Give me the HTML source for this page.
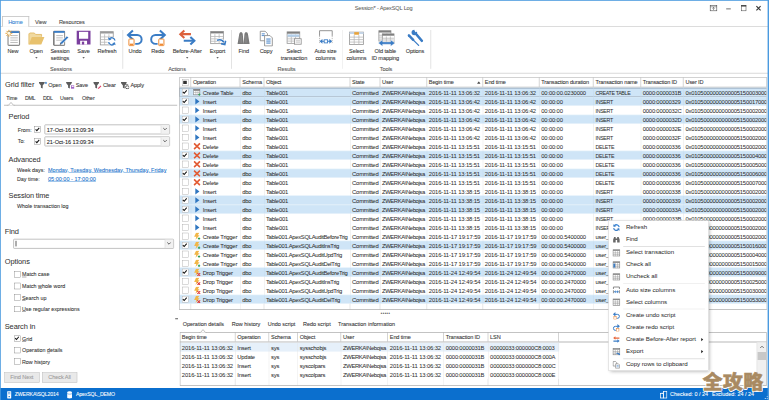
<!DOCTYPE html><html><head><meta charset="utf-8"><title>Session* - ApexSQL Log</title><style>html,body{margin:0;padding:0;background:#fff;overflow:hidden;width:769px;height:400px}
#app{position:absolute;left:0;top:0;width:1922.5px;height:1000px;transform:scale(.4);transform-origin:0 0;background:#fff;font-family:"Liberation Sans","Noto Sans CJK SC",sans-serif;font-size:14px;letter-spacing:-.25px;color:#242424;-webkit-text-stroke:.18px;box-sizing:border-box;overflow:hidden}
#app *{box-sizing:border-box}
#app>div,.grid>div,.gr>div,.gh>div{position:absolute}
#app{margin:0}
.title{left:0;width:1922px;top:11.6px;text-align:center;font-size:14px;letter-spacing:-.42px;color:#555;-webkit-text-stroke:.05px;margin-left:-2px}
.wc{left:1768px;top:6px;width:150px;height:28px}
.tabline{left:0;top:65px;width:1920px;height:2.2px;background:#d4d4d4}
.tab{top:44px;width:56px;height:22px;text-align:center;font-size:14px;line-height:22px;color:#444;left:6px}
.tab.home{left:4.5px;width:68px;top:40px;height:26.6px;line-height:27px;border:2px solid #c2c2c2;border-bottom:none;background:#fff;color:#2a7fd2}
.rb{top:71.2px;width:100px;height:90px;text-align:center}
.ri{height:46px;display:flex;justify-content:center}
.ri svg{width:46px;height:46px;display:block}
.rl{font-size:14px;line-height:16.4px;margin-top:2.5px;color:#333;white-space:nowrap}
.dd{position:absolute;left:47px;top:71.6px;width:0;height:0;border:3px solid transparent;border-top:3.6px solid #333;border-bottom:none}
.rsep{top:75px;width:1.5px;height:97px;background:#dcdcdc}
.rg{top:163.5px;width:150px;text-align:center;font-size:14px;color:#555}
.ribline{left:0;top:181.5px;width:1920px;height:2px;background:#d0d0d0}
.h1{font-size:18.6px;letter-spacing:-.2px;-webkit-text-stroke:.1px;color:#333;white-space:nowrap}
.h2{left:21.5px;font-size:18.4px;letter-spacing:-.3px;-webkit-text-stroke:.1px;color:#333;white-space:nowrap}
.fb{top:200px;height:24px;display:flex;align-items:center;font-size:14px;color:#333;white-space:nowrap}
.fb svg{width:21px;height:21px;margin-right:3px}
.st{top:238.2px;font-size:13.2px;color:#333;white-space:nowrap}
.stline{left:10px;top:252.3px;width:433px;height:12px;border-bottom:2px solid #b0b0b0}
.stline svg,.bnotch svg{position:absolute;left:7px;top:1px;width:21px;height:11px}
.bnotch svg{left:0;top:0}
.lbl{font-size:13.4px;letter-spacing:0;color:#333;white-space:nowrap}
.lbl u{text-decoration:underline}
.lnk{font-size:13.8px;letter-spacing:0;color:#1a73cc;text-decoration:underline;white-space:nowrap}
.cb{width:15.5px;height:15.5px;border:1.8px solid #7a7a7a;background:#fff}
.cb svg{position:absolute;left:-.4px;top:-.4px;width:13.2px;height:13.2px}
.cb.sm{width:16.5px;height:16.5px;position:absolute;left:6.8px;top:3.2px;border:1.6px solid #a2a2a2}
.cb.sm svg{width:14px;height:14px}
.combo{height:25.5px;border:2px solid #b2b2b2;border-radius:2.5px;background:#fff;font-size:14px;letter-spacing:-.2px;line-height:22.6px;padding-left:4.2px;color:#222}
.combo i{position:absolute;right:0;top:0;width:21px;height:21.5px;border-left:1.6px solid #cfcfcf;background:#f1f1f1}
.combo i svg{position:absolute;left:4px;top:5px;width:11px;height:9px}
.caret{position:absolute;left:4px;top:3px;width:1.6px;height:14px;background:#333}
.btn{top:931px;width:88px;height:25.5px;border:1.6px solid #b4b4b4;background:#e9e9e9;color:#9a9a9a;font-size:14px;text-align:center;line-height:23px}
.grid:after{content:"";position:absolute;left:0;top:0;right:0;bottom:0;border:2.2px solid #b4b4b4;pointer-events:none;z-index:3}
.grid{background:#fff;overflow:hidden}
.gh{left:0;top:0;width:100%;height:26px;border-bottom:2.2px solid #a6a6a6;background:#fff}
.gh .c{top:0;height:25px;border-right:2px solid #cacaca;line-height:24.6px;padding-left:4.5px;font-size:14px;color:#333;white-space:nowrap;overflow:hidden}
.gr{left:0;width:100%;height:22.5px}
.gr.on{background:#cfe5f7}
.gr.on:after{content:"";position:absolute;left:0;right:0;top:0;bottom:0;border-top:1.2px solid #e9f3fb;border-bottom:1.2px solid #e9f3fb;pointer-events:none}
.gr.foc{box-shadow:inset 0 2.3px 0 #8da0b3,inset 0 -2.3px 0 #8da0b3,inset 2px 0 0 #8da0b3}
.gr.foc:after{border:none !important}
.gr .c{top:0;height:22.5px;line-height:22px;padding-left:4.5px;font-size:14px;color:#2a2a2a;white-space:nowrap;overflow:hidden;border-right:1.6px solid #dedede}
.gr.on .c{border-right-color:#c0d8ec}
.gr .c svg.oi{position:absolute;left:5.5px;top:2.2px;width:19px;height:19px}
.opt{left:24.8px}
.grid.b .gr.sel{background:#e6f0fa;width:949px}
.grid.b .gr .c{border-right-color:#e2e2e2}
.sorti{position:absolute;right:3.5px;top:10px;width:10px;height:6.5px}
.dots{font-size:16px;font-weight:bold;letter-spacing:.3px;color:#555;line-height:6px}
.pin{width:7px;height:2.6px;background:#333}
.bt{top:801.5px;font-size:13.7px;letter-spacing:0;color:#333;white-space:nowrap}
.bnotch{width:30px;height:12px}
.vsb{position:absolute;right:0;top:26px;width:25px;bottom:0;background:#f0f0f0;border-left:1.4px solid #dcdcdc}
.vsb svg{position:absolute;left:6px;top:7px;width:12px;height:9px}
.vsb .thumb{position:absolute;left:1.5px;top:23.5px;width:21px;height:20px;background:#c8c8c8}
.status{left:0;top:970px;width:1923px;height:31px;background:#0b6fce;color:#fff}
.status div{position:absolute}
.stx{top:9.2px;font-size:13.6px;letter-spacing:0;white-space:nowrap;color:#fff}
.si{top:6px;width:20px;height:22px}
.si svg{width:100%;height:100%}
.grip{right:2px;bottom:2px;width:14px;height:14px}
.grip svg{width:14px;height:14px}
.menu{z-index:40;background:#fff;border:1.4px solid #c6c6c6;box-shadow:3px 3px 9px rgba(0,0,0,.32)}
.menu div{position:absolute}
.mi{left:0;width:100%;height:30px;line-height:30px;font-size:15.5px;letter-spacing:-.15px;color:#303030;-webkit-text-stroke:.05px;white-space:nowrap}
.mi span{position:absolute;left:42.5px;top:-.8px}
.mic{left:9px;top:5px;width:20px;height:20px}
.mic svg{width:20px;height:20px;display:block}
.mi b{position:absolute;right:12.5px;top:10.6px;width:0;height:0;border:4.4px solid transparent;border-left:5.4px solid #222;border-right:none}
.msep{left:36px;right:9px;height:1.5px;background:#dadada}
.wm{left:1756px;top:925.5px;font-family:"Liberation Sans","Noto Sans CJK SC",sans-serif;font-weight:900;font-size:50.4px;line-height:60px;color:#a98a62;letter-spacing:.6px;white-space:nowrap;transform:scaleY(.94);transform-origin:0 85%;-webkit-text-stroke:1.2px #a98a62;text-shadow:-2px 0 0 #fff,2px 0 0 #fff,0 -2px 0 #fff,0 2px 0 #fff,-1.5px -1.5px 0 #fff,1.5px -1.5px 0 #fff,-1.5px 1.5px 0 #fff,1.5px 1.5px 0 #fff;z-index:60}

.bdl{left:0;top:0;width:2.2px;height:1000px;background:#4a9adf;z-index:50}
.bdr{right:0;top:0;width:3.1px;height:1000px;background:#4a9adf;z-index:50}
.bdt{left:0;top:0;width:1922.5px;height:2px;background:#4a9adf;z-index:50}
.grid:not(.b) .gr .c span{position:relative;top:2.1px}
.grid.b .gr .c span{position:relative;top:2.3px}
.gh .c span{position:relative;top:1.2px}
.gh .c{letter-spacing:-.4px}
.gr .k5{letter-spacing:-.66px}
.gr .k6,.gr .k7{letter-spacing:0}
.gr .k8{letter-spacing:-.08px}
.gr .c span.up{font-size:12.6px;letter-spacing:-.5px}
.gr .c span.lg{letter-spacing:-.45px}
.gr .b0,.gr .b5{letter-spacing:0}
.gr .b4{letter-spacing:-.66px}
.stx.cap{font-size:13px;letter-spacing:-.35px}
.vl{width:1.4px;margin-left:-1.4px;background:#e2e2e2}
.gr .c{font-size:14.7px;letter-spacing:-.58px;color:#303030;-webkit-text-stroke:.1px}
.gr .k5,.gr .b4{letter-spacing:-.99px}
.gr .k6,.gr .k7,.gr .b0,.gr .b5{letter-spacing:-.33px}
.gr .k8{letter-spacing:-.41px}
.gr .c span.up{font-size:13.2px;letter-spacing:-.8px}
.gr .c span.lg{letter-spacing:-.78px}
.grid:not(.b):after{border-right-color:#cdd3d8}
</style></head><body>
<div id="app"><div class="bdl"></div><div class="bdr"></div><div class="bdt"></div>
<div class="title">Session* - ApexSQL Log</div>
<div class="wc"><svg viewBox="0 0 150 28" width="150" height="28" fill="none" stroke="#444" stroke-width="1.400"><rect x="7.500" y="7.500" width="16.500" height="13.500"/><path d="M7.500 11h16.500" stroke-width="1.200"/><path d="M15.800 12.500v6.500M13 15.500l2.800-3 2.800 3" stroke-width="1.300"/><path d="M47.500 16.200h11.500" stroke="#6a6a6a" stroke-width="2.400"/><rect x="85.500" y="8" width="11.500" height="13" stroke-width="1.300"/><path d="M85 8.500h12.500" stroke="#333" stroke-width="3"/><path d="M123 9.500l10.500 10.500M133.500 9.500l-10.500 10.500" stroke="#333" stroke-width="2.800"/></svg></div>
<div class="tabline"></div>
<div class="tab home">Home</div><div class="tab" style="left:73.75px">View</div><div class="tab" style="left:147.25px">Resources</div>
<div class="rb" style="left:-17.5px"><div class="ri"><svg viewBox="0 0 32 32"><rect x="7" y="5" width="20" height="24.500" rx="1.500" fill="#fff" stroke="#8c8c8c" stroke-width="2"/><rect x="8" y="5" width="18" height="3" fill="#3a7cc5"/><path d="M11 12.5H24" stroke="#b8b8b8" stroke-width="1.6"/><path d="M11 16.5H24" stroke="#b8b8b8" stroke-width="1.6"/><path d="M11 20.5H24" stroke="#b8b8b8" stroke-width="1.6"/><path d="M11 24.5H24" stroke="#b8b8b8" stroke-width="1.6"/><path d="M8.500 2.500v12M2.500 8.500h12M4.300 4.300l8.400 8.400M12.700 4.300l-8.400 8.400" stroke="#e8a33a" stroke-width="1.700"/><circle cx="8.500" cy="8.500" r="2.600" fill="#fff8e0"/></svg></div><div class="rl">New</div></div>
<div class="rb" style="left:40.5px"><div class="ri"><svg viewBox="0 0 32 32"><path d="M3 28V9.500l1.500-1.500h8l2 2.500h10.500v4" fill="#f0d9a0" stroke="#e3bd6a" stroke-width="1.600"/><path d="M3 28l5-13h22l-5.500 13z" fill="#e8c26e"/></svg></div><div class="rl">Open</div><div class="dd"></div></div>
<div class="rb" style="left:100px"><div class="ri"><svg viewBox="0 0 32 32"><rect x="5" y="5" width="19" height="24.500" rx="1" fill="#fff" stroke="#8c8c8c" stroke-width="1.800"/><path d="M5.300 6v23" stroke="#7a7a7a" stroke-width="2.400"/><rect x="5" y="4.500" width="19" height="3.200" fill="#3a7cc5"/><path d="M9.5 12.5H21" stroke="#b8b8b8" stroke-width="1.6"/><path d="M9.5 16.5H21" stroke="#b8b8b8" stroke-width="1.6"/><path d="M9.5 20.5H21" stroke="#b8b8b8" stroke-width="1.6"/><path d="M15.500 28.500l1.300-4.300L28 13l3 3-11.200 11.200z" fill="#3a7cc5" stroke="#fff" stroke-width="1"/><path d="M15.500 28.500l.9-3 2.100 2.100z" fill="#444"/></svg></div><div class="rl">Session<br>settings</div></div>
<div class="rb" style="left:158.75px"><div class="ri"><svg viewBox="0 0 32 32"><path d="M4 4h24v24H4z" fill="#7b3f9e"/><rect x="8" y="6" width="16" height="12" fill="#fff"/><rect x="10" y="21.5" width="12" height="6.5" fill="#fff"/><rect x="13" y="23" width="4" height="5" fill="#7b3f9e"/></svg></div><div class="rl">Save</div><div class="dd"></div></div>
<div class="rb" style="left:217.5px"><div class="ri"><svg viewBox="0 0 32 32"><rect x="4" y="5.7" width="22.5" height="23" fill="#fff" stroke="#969696" stroke-width="1.4"/><rect x="4" y="5.7" width="22.5" height="3.2" fill="#9a9a9a"/><path d="M4 14.8h22.5" stroke="#b5b5b5" stroke-width="1.3"/><path d="M4 19.4h22.5" stroke="#b5b5b5" stroke-width="1.3"/><path d="M4 24.1h22.5" stroke="#b5b5b5" stroke-width="1.3"/><path d="M11.5 10.2v18.5" stroke="#b5b5b5" stroke-width="1.3"/><path d="M19.0 10.2v18.5" stroke="#b5b5b5" stroke-width="1.3"/><circle cx="24" cy="22.5" r="7.5" fill="#fff"/><path d="M29.5 21a5.6 5.6 0 0 0-10-2.6" fill="none" stroke="#3a7cc5" stroke-width="2.4"/><path d="M17.5 15.5l1 5.4 5-1.8z" fill="#3a7cc5"/><path d="M18.5 24a5.6 5.6 0 0 0 10 2.6" fill="none" stroke="#3a7cc5" stroke-width="2.4"/><path d="M30.5 29.5l-1-5.4-5 1.8z" fill="#3a7cc5"/></svg></div><div class="rl">Refresh</div></div>
<div class="rb" style="left:287.5px"><div class="ri"><svg viewBox="0 0 32 32"><path d="M5 11.500h14.500a7.700 7.700 0 0 1 0 15.400h-3.500" fill="none" stroke="#3a7cc5" stroke-width="3.400"/><path d="M12 3.500l-8.500 8 8.500 8" fill="none" stroke="#3a7cc5" stroke-width="3.600"/><rect x="5" y="18.500" width="9" height="11.500" rx="1" fill="#fff" stroke="#ee8a34" stroke-width="1.700"/><rect x="6.500" y="26.500" width="6" height="2.500" fill="#ee8a34"/></svg></div><div class="rl">Undo</div></div>
<div class="rb" style="left:344.25px"><div class="ri"><svg viewBox="0 0 32 32"><path d="M27 11.500H12.500a7.700 7.700 0 0 0 0 15.400h3.500" fill="none" stroke="#3a7cc5" stroke-width="3.400"/><path d="M20 3.500l8.500 8-8.500 8" fill="none" stroke="#3a7cc5" stroke-width="3.600"/><rect x="18" y="18.500" width="9" height="11.500" rx="1" fill="#fff" stroke="#ee8a34" stroke-width="1.700"/><rect x="19.500" y="26.500" width="6" height="2.500" fill="#ee8a34"/></svg></div><div class="rl">Redo</div></div>
<div class="rb" style="left:418px"><div class="ri"><svg viewBox="0 0 32 32"><path d="M4.500 10h18" stroke="#dc613c" stroke-width="3.600"/><path d="M11 3.500L4 10l7 6.500" fill="none" stroke="#dc613c" stroke-width="3.600"/><path d="M10 21.500h18" stroke="#3a7cc5" stroke-width="3.600"/><path d="M21.500 15l7 6.500-7 6.500" fill="none" stroke="#3a7cc5" stroke-width="3.600"/></svg></div><div class="rl">Before-After</div><div class="dd"></div></div>
<div class="rb" style="left:493.75px"><div class="ri"><svg viewBox="0 0 32 32"><rect x="4" y="5.5" width="22" height="21" fill="#fff" stroke="#969696" stroke-width="1.4"/><rect x="4" y="5.5" width="22" height="3.2" fill="#7f7f7f"/><path d="M4 14.1h22" stroke="#b5b5b5" stroke-width="1.3"/><path d="M4 18.2h22" stroke="#b5b5b5" stroke-width="1.3"/><path d="M4 22.4h22" stroke="#b5b5b5" stroke-width="1.3"/><path d="M11.3 10.0v16.5" stroke="#b5b5b5" stroke-width="1.3"/><path d="M18.7 10.0v16.5" stroke="#b5b5b5" stroke-width="1.3"/><path d="M15 20.500c5.500-1.500 9.500-.5 11.500 3.500" fill="none" stroke="#fff" stroke-width="5"/><path d="M15 20.500c5.500-1.500 9.500-.5 11.500 3.500" fill="none" stroke="#3a7cc5" stroke-width="2.800"/><path d="M22 26.500l6.500 1.500 1.500-6.500" fill="none" stroke="#3a7cc5" stroke-width="2.800"/></svg></div><div class="rl">Export</div><div class="dd"></div></div>
<div class="rb" style="left:559.25px"><div class="ri"><svg viewBox="0 0 32 32"><path d="M5.500 27L8.500 9.500l1.500-3h3l1.500 3L16 27zM16 27L17.500 9.500l1.500-3h3l1.500 3L26.500 27z" fill="#7a7a7a"/><path d="M10 12v13M12.500 12v13M19 12v13M21.500 12v13" stroke="#9a9a9a" stroke-width=".8"/></svg></div><div class="rl">Find</div></div>
<div class="rb" style="left:615px"><div class="ri"><svg viewBox="0 0 32 32"><path d="M6 5h8.500l4 4v12.500H6z" fill="#fff" stroke="#8c8c8c" stroke-width="1.500"/><path d="M8.5 9.5H14" stroke="#3a7cc5" stroke-width="1.5"/><path d="M8.5 12.5H14" stroke="#3a7cc5" stroke-width="1.5"/><path d="M13.500 12.500h9.500l4 4v14H13.500z" fill="#fff" stroke="#8c8c8c" stroke-width="1.500"/><path d="M16.5 18.5H24" stroke="#3a7cc5" stroke-width="1.7"/><path d="M16.5 22H24" stroke="#3a7cc5" stroke-width="1.7"/><path d="M16.5 25.5H24" stroke="#3a7cc5" stroke-width="1.7"/></svg></div><div class="rl">Copy</div></div>
<div class="rb" style="left:685px"><div class="ri"><svg viewBox="0 0 32 32"><rect x="4" y="6" width="22" height="20" fill="#fff" stroke="#969696" stroke-width="1.4"/><rect x="4" y="6" width="22" height="3.2" fill="#7f7f7f"/><path d="M4 14.4h22" stroke="#b5b5b5" stroke-width="1.3"/><path d="M4 18.2h22" stroke="#b5b5b5" stroke-width="1.3"/><path d="M4 22.1h22" stroke="#b5b5b5" stroke-width="1.3"/><path d="M11.3 10.5v15.5" stroke="#b5b5b5" stroke-width="1.3"/><path d="M18.7 10.5v15.5" stroke="#b5b5b5" stroke-width="1.3"/><rect x="4.800" y="10.500" width="20.400" height="4" fill="#b3cfea"/><rect x="17" y="18" width="11.500" height="9.500" fill="#fff" stroke="#8c8c8c" stroke-width="1.400"/><path d="M19 21.500h7.500M19 24h7.500" stroke="#aaa" stroke-width="1.100"/></svg></div><div class="rl">Select<br>transaction</div></div>
<div class="rb" style="left:763.75px"><div class="ri"><svg viewBox="0 0 32 32"><path d="M5.500 13V4h22v9" fill="none" stroke="#8c8c8c" stroke-width="1.600"/><path d="M5.500 13v14M27.500 13v14" stroke="#b0b0b0" stroke-width="1.400" stroke-dasharray="2 1.500"/><path d="M5.500 22.500l5-4v8zM27.500 22.500l-5-4v8z" fill="#3a7cc5"/><path d="M9 22.500h15" stroke="#3a7cc5" stroke-width="1.800"/><rect x="13.500" y="19.800" width="6" height="5.400" fill="#fff" stroke="#3a7cc5" stroke-width="1.500"/></svg></div><div class="rl">Auto size<br>columns</div></div>
<div class="rb" style="left:841.25px"><div class="ri"><svg viewBox="0 0 32 32"><rect x="4" y="6.5" width="24.5" height="21.5" fill="#fff" stroke="#969696" stroke-width="1.4"/><rect x="4" y="6.5" width="24.5" height="3.2" fill="#c3d5e8"/><path d="M4 15.2h24.5" stroke="#b5b5b5" stroke-width="1.3"/><path d="M4 19.5h24.5" stroke="#b5b5b5" stroke-width="1.3"/><path d="M4 23.8h24.5" stroke="#b5b5b5" stroke-width="1.3"/><path d="M12.2 11.0v17.0" stroke="#b5b5b5" stroke-width="1.3"/><path d="M20.3 11.0v17.0" stroke="#b5b5b5" stroke-width="1.3"/><rect x="12.200" y="6.500" width="8.200" height="4.500" fill="#e8a33a"/></svg></div><div class="rl">Select<br>columns</div></div>
<div class="rb" style="left:913.25px"><div class="ri"><svg viewBox="0 0 32 32"><rect x="5" y="4" width="21" height="18" fill="#fff" stroke="#969696" stroke-width="1.4"/><rect x="5" y="4" width="21" height="3.2" fill="#7f7f7f"/><path d="M5 11.9h21" stroke="#b5b5b5" stroke-width="1.3"/><path d="M5 15.2h21" stroke="#b5b5b5" stroke-width="1.3"/><path d="M5 18.6h21" stroke="#b5b5b5" stroke-width="1.3"/><path d="M12.0 8.5v13.5" stroke="#b5b5b5" stroke-width="1.3"/><path d="M19.0 8.5v13.5" stroke="#b5b5b5" stroke-width="1.3"/><rect x="11" y="9.5" width="21" height="17" fill="#fff" stroke="#969696" stroke-width="1.4"/><rect x="11" y="9.5" width="21" height="3.2" fill="#7f7f7f"/><path d="M11 17.1h21" stroke="#b5b5b5" stroke-width="1.3"/><path d="M11 20.2h21" stroke="#b5b5b5" stroke-width="1.3"/><path d="M11 23.4h21" stroke="#b5b5b5" stroke-width="1.3"/><path d="M18.0 14.0v12.5" stroke="#b5b5b5" stroke-width="1.3"/><path d="M25.0 14.0v12.5" stroke="#b5b5b5" stroke-width="1.3"/><path d="M4 25.500l7.500-5.500v3.500h14v-3.500l7.500 5.500-7.500 5.500v-3.500h-14v3.500z" fill="#3a7cc5" stroke="#fff" stroke-width=".6"/></svg></div><div class="rl">Old table<br>ID mapping</div></div>
<div class="rb" style="left:987.5px"><div class="ri"><svg viewBox="0 0 32 32"><path d="M16 8l11.500 13.500" stroke="#3a7cc5" stroke-width="4.600" stroke-linecap="round"/><circle cx="14.500" cy="7" r="4.800" fill="#3a7cc5"/><path d="M13.500 1l3 5.500 5-2z" fill="#fff"/><path d="M5 12l7.500 8" stroke="#3a7cc5" stroke-width="4.200" stroke-linecap="round"/><path d="M12 19.500l10 10" stroke="#3a7cc5" stroke-width="2.200" stroke-linecap="round"/></svg></div><div class="rl">Options</div></div>
<div class="rsep" style="left:306.25px"></div>
<div class="rsep" style="left:578.25px"></div>
<div class="rsep" style="left:855.75px"></div>
<div class="rsep" style="left:1076.25px"></div>
<div class="rg" style="left:77.5px">Sessions</div>
<div class="rg" style="left:367.5px">Actions</div>
<div class="rg" style="left:641.25px">Results</div>
<div class="rg" style="left:890px">Tools</div>
<div class="ribline"></div>
<div class="h1" style="left:12.5px;top:201px">Grid filter</div>
<div class="fb" style="left:96.5px"><svg viewBox="0 0 16 16"><path d="M0.300 2.500h10.800v1.700L7.400 8.800v6l-3.400-1.700V8.800L0.300 4.200z" fill="#5c5c5c"/><path d="M13.500 1.800v4.400M11.300 4h4.400M12 2.500l3 3M15 2.500l-3 3" stroke="#3a7cc5" stroke-width="1"/></svg><span>Open</span></div>
<div class="fb" style="left:165.25px"><svg viewBox="0 0 16 16"><path d="M0.300 2.500h10.800v1.700L7.400 8.800v6l-3.400-1.700V8.800L0.300 4.200z" fill="#5c5c5c"/><rect x="9.500" y="8.500" width="6.500" height="6.500" fill="#a064c4"/><rect x="11" y="9.300" width="3.500" height="2.300" fill="#fff"/></svg><span>Save</span></div>
<div class="fb" style="left:233.25px"><svg viewBox="0 0 16 16"><path d="M0.300 2.500h10.800v1.700L7.400 8.800v6l-3.400-1.700V8.800L0.300 4.200z" fill="#5c5c5c"/><path d="M9.500 15l5.500-5.500" stroke="#e0406a" stroke-width="2.200"/></svg><span>Clear</span></div>
<div class="fb" style="left:302px"><svg viewBox="0 0 16 16"><path d="M0.300 2.500h10.800v1.700L7.400 8.800v6l-3.400-1.700V8.800L0.300 4.200z" fill="#5c5c5c"/><ellipse cx="12.500" cy="12.300" rx="3.600" ry="2.800" fill="#fff" stroke="#444" stroke-width="1.600"/><path d="M5 7.300h9" stroke="#5c5c5c" stroke-width="1.400"/></svg><span>Apply</span></div>
<div class="st" style="left:15.5px">Time</div>
<div class="st" style="left:62.5px"><span style="letter-spacing:-.9px">DML</span></div>
<div class="st" style="left:107.5px"><span style="letter-spacing:-.9px">DDL</span></div>
<div class="st" style="left:150px">Users</div>
<div class="st" style="left:204.75px">Other</div>
<div class="stline"><svg viewBox="0 0 21 11"><path d="M0 10.500h4l6.500-7.500 6.500 7.500h4" fill="#fff" stroke="#b0b0b0" stroke-width="2"/><path d="M4.500 11.500h12" stroke="#fff" stroke-width="2.500"/></svg></div>
<div class="h2" style="top:280.25px">Period</div>
<div class="lbl" style="left:44.25px;top:317px">From:</div>
<div class="lbl" style="left:44.25px;top:345.75px">To:</div>
<div class="cb on" style="left:86.25px;top:316.25px"><svg viewBox="0 0 12 12"><path d="M1.800 5.800l2.900 3 5.400-6.200" fill="none" stroke="#111" stroke-width="2.300"/></svg></div>
<div class="combo" style="left:110.75px;top:310.75px;width:313.75px"><span>17-Oct-16 13:09:34</span><i><svg viewBox="0 0 11 9"><path d="M1.200 2.200l4.300 4.300 4.300-4.300" fill="none" stroke="#505050" stroke-width="2.200"/></svg></i></div>
<div class="cb on" style="left:86.25px;top:346.25px"><svg viewBox="0 0 12 12"><path d="M1.800 5.800l2.900 3 5.400-6.200" fill="none" stroke="#111" stroke-width="2.300"/></svg></div>
<div class="combo" style="left:110.75px;top:340.75px;width:313.75px"><span>21-Oct-16 13:09:34</span><i><svg viewBox="0 0 11 9"><path d="M1.200 2.200l4.300 4.300 4.300-4.300" fill="none" stroke="#505050" stroke-width="2.200"/></svg></i></div>
<div class="h2" style="top:387.75px">Advanced</div>
<div class="lbl" style="left:42.5px;top:418.25px">Week days:</div>
<div class="lnk" style="left:120px;top:418.25px">Monday, Tuesday, Wednesday, Thursday, Friday</div>
<div class="lbl" style="left:42.5px;top:440px">Day time:</div>
<div class="lnk" style="left:120px;top:440px">05:00:00 - 17:00:00</div>
<div class="h2" style="top:477px">Session time</div>
<div class="lbl" style="left:42.5px;top:507.5px">Whole transaction log</div>
<div class="h1" style="left:11.75px;top:567.25px">Find</div>
<div class="combo" style="left:33.25px;top:596.5px;width:401.25px"><span class="caret"></span><i><svg viewBox="0 0 11 9"><path d="M1.200 2.200l4.300 4.300 4.300-4.300" fill="none" stroke="#505050" stroke-width="2.200"/></svg></i></div>
<div class="h1" style="left:11.75px;top:643.5px">Options</div>
<div class="cb" style="left:35.75px;top:678.25px"></div><div class="lbl" style="left:55px;top:679.25px"><u>M</u>atch case</div>
<div class="cb" style="left:35.75px;top:707px"></div><div class="lbl" style="left:55px;top:708px">Match <u>w</u>hole word</div>
<div class="cb" style="left:35.75px;top:735.75px"></div><div class="lbl" style="left:55px;top:736.75px"><u>S</u>earch up</div>
<div class="cb" style="left:35.75px;top:764.5px"></div><div class="lbl" style="left:55px;top:765.5px"><u>U</u>se regular expressions</div>
<div class="h1" style="left:11.75px;top:804.75px">Search in</div>
<div class="cb on" style="left:35.75px;top:838.75px"><svg viewBox="0 0 12 12"><path d="M1.800 5.800l2.900 3 5.400-6.200" fill="none" stroke="#111" stroke-width="2.300"/></svg></div><div class="lbl" style="left:55px;top:839.75px"><u>G</u>rid</div>
<div class="cb" style="left:35.75px;top:867.5px"></div><div class="lbl" style="left:55px;top:868.5px">Operation <u>d</u>etails</div>
<div class="cb" style="left:35.75px;top:896.25px"></div><div class="lbl" style="left:55px;top:897.25px">Row his<u>t</u>ory</div>
<div class="btn" style="left:10.5px">Find Next</div><div class="btn" style="left:104.75px">Check All</div>
<div class="grid" style="left:448px;top:193.25px;width:1470.25px;height:582px">
<div class="gh">
<div class="c" style="left:0px;width:29.75px"><div class="cb sm" style="top:5px"><div style="position:absolute;left:2.600px;top:2.600px;width:8.400px;height:8.400px;background:#333"></div></div></div>
<div class="c" style="left:29.75px;width:123.5px"><span>Operation</span></div>
<div class="c" style="left:153.25px;width:59.25px"><span>Schema</span></div>
<div class="c" style="left:212.5px;width:215.25px"><span>Object</span></div>
<div class="c" style="left:427.75px;width:74.75px"><span>State</span></div>
<div class="c" style="left:502.5px;width:117px"><span>User</span></div>
<div class="c" style="left:619.5px;width:140px"><span>Begin time</span><svg class="sorti" viewBox="0 0 8 6"><path d="M0 5.800l4-5.600 4 5.600z" fill="#4a4a4a"/></svg></div>
<div class="c" style="left:759.5px;width:141px"><span>End time</span></div>
<div class="c" style="left:900.5px;width:135.75px"><span>Transaction duration</span></div>
<div class="c" style="left:1036.25px;width:118.25px"><span>Transaction name</span></div>
<div class="c" style="left:1154.5px;width:106.75px"><span>Transaction ID</span></div>
<div class="c" style="left:1261.25px;width:208.25px"><span>User ID</span></div>
</div>
<div class="gr on foc" style="top:26px">
<div class="c k0" style="left:0px;width:29.75px"><div class="cb sm on"><svg viewBox="0 0 12 12"><path d="M1.800 5.800l2.900 3 5.400-6.200" fill="none" stroke="#111" stroke-width="2.300"/></svg></div></div>
<div class="c k1" style="left:29.75px;width:123.5px"><svg class="oi" viewBox="0 0 16 16"><rect x="1" y="2" width="13" height="11.500" fill="#fff" stroke="#777" stroke-width="1.300"/><rect x="1" y="2" width="13" height="3" fill="#777"/><path d="M1 8.500h13M5.500 5v8.500M10 5v8.500" stroke="#9a9a9a" stroke-width="1"/><path d="M13 10.500v5M10.500 13h5" stroke="#2f9d58" stroke-width="1.800"/></svg><span class="opt">Create Table</span></div>
<div class="c k2" style="left:153.25px;width:59.25px"><span>dbo</span></div>
<div class="c k3" style="left:212.5px;width:215.25px"><span>Table001</span></div>
<div class="c k4" style="left:427.75px;width:74.75px"><span>Committed</span></div>
<div class="c k5" style="left:502.5px;width:117px"><span>ZWERKA\Nebojsa</span></div>
<div class="c k6" style="left:619.5px;width:140px"><span>2016-11-11 13:06:32</span></div>
<div class="c k7" style="left:759.5px;width:141px"><span>2016-11-11 13:06:32</span></div>
<div class="c k8" style="left:900.5px;width:135.75px"><span>00:00:00.0230000</span></div>
<div class="c k9" style="left:1036.25px;width:118.25px"><span class="up">CREATE TABLE</span></div>
<div class="c k10" style="left:1154.5px;width:106.75px"><span>0000:0000031B</span></div>
<div class="c k11" style="left:1261.25px;width:208.25px"><span>0x0105000000000005150003000</span></div>
</div>
<div class="gr on" style="top:48.5px">
<div class="c k0" style="left:0px;width:29.75px"><div class="cb sm on"><svg viewBox="0 0 12 12"><path d="M1.800 5.800l2.900 3 5.400-6.200" fill="none" stroke="#111" stroke-width="2.300"/></svg></div></div>
<div class="c k1" style="left:29.75px;width:123.5px"><svg class="oi" viewBox="0 0 16 16"><path d="M4.500 1.600l8.600 6.400-8.600 6.400z" fill="#2f76c0"/></svg><span class="opt">Insert</span></div>
<div class="c k2" style="left:153.25px;width:59.25px"><span>dbo</span></div>
<div class="c k3" style="left:212.5px;width:215.25px"><span>Table001</span></div>
<div class="c k4" style="left:427.75px;width:74.75px"><span>Committed</span></div>
<div class="c k5" style="left:502.5px;width:117px"><span>ZWERKA\Nebojsa</span></div>
<div class="c k6" style="left:619.5px;width:140px"><span>2016-11-11 13:06:42</span></div>
<div class="c k7" style="left:759.5px;width:141px"><span>2016-11-11 13:06:42</span></div>
<div class="c k8" style="left:900.5px;width:135.75px"><span>00:00:00</span></div>
<div class="c k9" style="left:1036.25px;width:118.25px"><span class="up">INSERT</span></div>
<div class="c k10" style="left:1154.5px;width:106.75px"><span>0000:00000329</span></div>
<div class="c k11" style="left:1261.25px;width:208.25px"><span>0x0105000000000005150017000</span></div>
</div>
<div class="gr" style="top:71px">
<div class="c k0" style="left:0px;width:29.75px"><div class="cb sm"></div></div>
<div class="c k1" style="left:29.75px;width:123.5px"><svg class="oi" viewBox="0 0 16 16"><path d="M4.500 1.600l8.600 6.400-8.600 6.400z" fill="#2f76c0"/></svg><span class="opt">Insert</span></div>
<div class="c k2" style="left:153.25px;width:59.25px"><span>dbo</span></div>
<div class="c k3" style="left:212.5px;width:215.25px"><span>Table001</span></div>
<div class="c k4" style="left:427.75px;width:74.75px"><span>Committed</span></div>
<div class="c k5" style="left:502.5px;width:117px"><span>ZWERKA\Nebojsa</span></div>
<div class="c k6" style="left:619.5px;width:140px"><span>2016-11-11 13:06:42</span></div>
<div class="c k7" style="left:759.5px;width:141px"><span>2016-11-11 13:06:42</span></div>
<div class="c k8" style="left:900.5px;width:135.75px"><span>00:00:00</span></div>
<div class="c k9" style="left:1036.25px;width:118.25px"><span class="up">INSERT</span></div>
<div class="c k10" style="left:1154.5px;width:106.75px"><span>0000:0000032C</span></div>
<div class="c k11" style="left:1261.25px;width:208.25px"><span>0x0105000000000005150002000</span></div>
</div>
<div class="gr on" style="top:93.5px">
<div class="c k0" style="left:0px;width:29.75px"><div class="cb sm on"><svg viewBox="0 0 12 12"><path d="M1.800 5.800l2.900 3 5.400-6.200" fill="none" stroke="#111" stroke-width="2.300"/></svg></div></div>
<div class="c k1" style="left:29.75px;width:123.5px"><svg class="oi" viewBox="0 0 16 16"><path d="M4.500 1.600l8.600 6.400-8.600 6.400z" fill="#2f76c0"/></svg><span class="opt">Insert</span></div>
<div class="c k2" style="left:153.25px;width:59.25px"><span>dbo</span></div>
<div class="c k3" style="left:212.5px;width:215.25px"><span>Table001</span></div>
<div class="c k4" style="left:427.75px;width:74.75px"><span>Committed</span></div>
<div class="c k5" style="left:502.5px;width:117px"><span>ZWERKA\Nebojsa</span></div>
<div class="c k6" style="left:619.5px;width:140px"><span>2016-11-11 13:06:42</span></div>
<div class="c k7" style="left:759.5px;width:141px"><span>2016-11-11 13:06:42</span></div>
<div class="c k8" style="left:900.5px;width:135.75px"><span>00:00:00</span></div>
<div class="c k9" style="left:1036.25px;width:118.25px"><span class="up">INSERT</span></div>
<div class="c k10" style="left:1154.5px;width:106.75px"><span>0000:0000032D</span></div>
<div class="c k11" style="left:1261.25px;width:208.25px"><span>0x0105000000000005150002000</span></div>
</div>
<div class="gr" style="top:116px">
<div class="c k0" style="left:0px;width:29.75px"><div class="cb sm"></div></div>
<div class="c k1" style="left:29.75px;width:123.5px"><svg class="oi" viewBox="0 0 16 16"><path d="M4.500 1.600l8.600 6.400-8.600 6.400z" fill="#2f76c0"/></svg><span class="opt">Insert</span></div>
<div class="c k2" style="left:153.25px;width:59.25px"><span>dbo</span></div>
<div class="c k3" style="left:212.5px;width:215.25px"><span>Table001</span></div>
<div class="c k4" style="left:427.75px;width:74.75px"><span>Committed</span></div>
<div class="c k5" style="left:502.5px;width:117px"><span>ZWERKA\Nebojsa</span></div>
<div class="c k6" style="left:619.5px;width:140px"><span>2016-11-11 13:06:42</span></div>
<div class="c k7" style="left:759.5px;width:141px"><span>2016-11-11 13:06:42</span></div>
<div class="c k8" style="left:900.5px;width:135.75px"><span>00:00:00</span></div>
<div class="c k9" style="left:1036.25px;width:118.25px"><span class="up">INSERT</span></div>
<div class="c k10" style="left:1154.5px;width:106.75px"><span>0000:0000032E</span></div>
<div class="c k11" style="left:1261.25px;width:208.25px"><span>0x0105000000000005150002000</span></div>
</div>
<div class="gr" style="top:138.5px">
<div class="c k0" style="left:0px;width:29.75px"><div class="cb sm"></div></div>
<div class="c k1" style="left:29.75px;width:123.5px"><svg class="oi" viewBox="0 0 16 16"><path d="M4.500 1.600l8.600 6.400-8.600 6.400z" fill="#2f76c0"/></svg><span class="opt">Insert</span></div>
<div class="c k2" style="left:153.25px;width:59.25px"><span>dbo</span></div>
<div class="c k3" style="left:212.5px;width:215.25px"><span>Table001</span></div>
<div class="c k4" style="left:427.75px;width:74.75px"><span>Committed</span></div>
<div class="c k5" style="left:502.5px;width:117px"><span>ZWERKA\Nebojsa</span></div>
<div class="c k6" style="left:619.5px;width:140px"><span>2016-11-11 13:06:42</span></div>
<div class="c k7" style="left:759.5px;width:141px"><span>2016-11-11 13:06:42</span></div>
<div class="c k8" style="left:900.5px;width:135.75px"><span>00:00:00</span></div>
<div class="c k9" style="left:1036.25px;width:118.25px"><span class="up">INSERT</span></div>
<div class="c k10" style="left:1154.5px;width:106.75px"><span>0000:0000032F</span></div>
<div class="c k11" style="left:1261.25px;width:208.25px"><span>0x0105000000000005150002000</span></div>
</div>
<div class="gr" style="top:161px">
<div class="c k0" style="left:0px;width:29.75px"><div class="cb sm"></div></div>
<div class="c k1" style="left:29.75px;width:123.5px"><svg class="oi" viewBox="0 0 16 16"><path d="M1.800 2l12.400 12M14.200 2l-12.400 12" stroke="#e25a32" stroke-width="3.500"/></svg><span class="opt">Delete</span></div>
<div class="c k2" style="left:153.25px;width:59.25px"><span>dbo</span></div>
<div class="c k3" style="left:212.5px;width:215.25px"><span>Table001</span></div>
<div class="c k4" style="left:427.75px;width:74.75px"><span>Committed</span></div>
<div class="c k5" style="left:502.5px;width:117px"><span>ZWERKA\Nebojsa</span></div>
<div class="c k6" style="left:619.5px;width:140px"><span>2016-11-11 13:15:51</span></div>
<div class="c k7" style="left:759.5px;width:141px"><span>2016-11-11 13:15:51</span></div>
<div class="c k8" style="left:900.5px;width:135.75px"><span>00:00:00</span></div>
<div class="c k9" style="left:1036.25px;width:118.25px"><span class="up">DELETE</span></div>
<div class="c k10" style="left:1154.5px;width:106.75px"><span>0000:00000336</span></div>
<div class="c k11" style="left:1261.25px;width:208.25px"><span>0x0105000000000005150002000</span></div>
</div>
<div class="gr on" style="top:183.5px">
<div class="c k0" style="left:0px;width:29.75px"><div class="cb sm on"><svg viewBox="0 0 12 12"><path d="M1.800 5.800l2.900 3 5.400-6.200" fill="none" stroke="#111" stroke-width="2.300"/></svg></div></div>
<div class="c k1" style="left:29.75px;width:123.5px"><svg class="oi" viewBox="0 0 16 16"><path d="M1.800 2l12.400 12M14.200 2l-12.400 12" stroke="#e25a32" stroke-width="3.500"/></svg><span class="opt">Delete</span></div>
<div class="c k2" style="left:153.25px;width:59.25px"><span>dbo</span></div>
<div class="c k3" style="left:212.5px;width:215.25px"><span>Table001</span></div>
<div class="c k4" style="left:427.75px;width:74.75px"><span>Committed</span></div>
<div class="c k5" style="left:502.5px;width:117px"><span>ZWERKA\Nebojsa</span></div>
<div class="c k6" style="left:619.5px;width:140px"><span>2016-11-11 13:15:51</span></div>
<div class="c k7" style="left:759.5px;width:141px"><span>2016-11-11 13:15:51</span></div>
<div class="c k8" style="left:900.5px;width:135.75px"><span>00:00:00</span></div>
<div class="c k9" style="left:1036.25px;width:118.25px"><span class="up">DELETE</span></div>
<div class="c k10" style="left:1154.5px;width:106.75px"><span>0000:00000336</span></div>
<div class="c k11" style="left:1261.25px;width:208.25px"><span>0x0105000000000005150004000</span></div>
</div>
<div class="gr" style="top:206px">
<div class="c k0" style="left:0px;width:29.75px"><div class="cb sm"></div></div>
<div class="c k1" style="left:29.75px;width:123.5px"><svg class="oi" viewBox="0 0 16 16"><path d="M1.800 2l12.400 12M14.200 2l-12.400 12" stroke="#e25a32" stroke-width="3.500"/></svg><span class="opt">Delete</span></div>
<div class="c k2" style="left:153.25px;width:59.25px"><span>dbo</span></div>
<div class="c k3" style="left:212.5px;width:215.25px"><span>Table001</span></div>
<div class="c k4" style="left:427.75px;width:74.75px"><span>Committed</span></div>
<div class="c k5" style="left:502.5px;width:117px"><span>ZWERKA\Nebojsa</span></div>
<div class="c k6" style="left:619.5px;width:140px"><span>2016-11-11 13:15:51</span></div>
<div class="c k7" style="left:759.5px;width:141px"><span>2016-11-11 13:15:51</span></div>
<div class="c k8" style="left:900.5px;width:135.75px"><span>00:00:00</span></div>
<div class="c k9" style="left:1036.25px;width:118.25px"><span class="up">DELETE</span></div>
<div class="c k10" style="left:1154.5px;width:106.75px"><span>0000:00000336</span></div>
<div class="c k11" style="left:1261.25px;width:208.25px"><span>0x0105000000000005150005000</span></div>
</div>
<div class="gr on" style="top:228.5px">
<div class="c k0" style="left:0px;width:29.75px"><div class="cb sm on"><svg viewBox="0 0 12 12"><path d="M1.800 5.800l2.900 3 5.400-6.200" fill="none" stroke="#111" stroke-width="2.300"/></svg></div></div>
<div class="c k1" style="left:29.75px;width:123.5px"><svg class="oi" viewBox="0 0 16 16"><path d="M1.800 2l12.400 12M14.200 2l-12.400 12" stroke="#e25a32" stroke-width="3.500"/></svg><span class="opt">Delete</span></div>
<div class="c k2" style="left:153.25px;width:59.25px"><span>dbo</span></div>
<div class="c k3" style="left:212.5px;width:215.25px"><span>Table001</span></div>
<div class="c k4" style="left:427.75px;width:74.75px"><span>Committed</span></div>
<div class="c k5" style="left:502.5px;width:117px"><span>ZWERKA\Nebojsa</span></div>
<div class="c k6" style="left:619.5px;width:140px"><span>2016-11-11 13:15:51</span></div>
<div class="c k7" style="left:759.5px;width:141px"><span>2016-11-11 13:15:51</span></div>
<div class="c k8" style="left:900.5px;width:135.75px"><span>00:00:00</span></div>
<div class="c k9" style="left:1036.25px;width:118.25px"><span class="up">DELETE</span></div>
<div class="c k10" style="left:1154.5px;width:106.75px"><span>0000:00000336</span></div>
<div class="c k11" style="left:1261.25px;width:208.25px"><span>0x0105000000000005150006000</span></div>
</div>
<div class="gr" style="top:251px">
<div class="c k0" style="left:0px;width:29.75px"><div class="cb sm"></div></div>
<div class="c k1" style="left:29.75px;width:123.5px"><svg class="oi" viewBox="0 0 16 16"><path d="M1.800 2l12.400 12M14.200 2l-12.400 12" stroke="#e25a32" stroke-width="3.500"/></svg><span class="opt">Delete</span></div>
<div class="c k2" style="left:153.25px;width:59.25px"><span>dbo</span></div>
<div class="c k3" style="left:212.5px;width:215.25px"><span>Table001</span></div>
<div class="c k4" style="left:427.75px;width:74.75px"><span>Committed</span></div>
<div class="c k5" style="left:502.5px;width:117px"><span>ZWERKA\Nebojsa</span></div>
<div class="c k6" style="left:619.5px;width:140px"><span>2016-11-11 13:15:51</span></div>
<div class="c k7" style="left:759.5px;width:141px"><span>2016-11-11 13:15:51</span></div>
<div class="c k8" style="left:900.5px;width:135.75px"><span>00:00:00</span></div>
<div class="c k9" style="left:1036.25px;width:118.25px"><span class="up">DELETE</span></div>
<div class="c k10" style="left:1154.5px;width:106.75px"><span>0000:00000336</span></div>
<div class="c k11" style="left:1261.25px;width:208.25px"><span>0x0105000000000005150007000</span></div>
</div>
<div class="gr" style="top:273.5px">
<div class="c k0" style="left:0px;width:29.75px"><div class="cb sm"></div></div>
<div class="c k1" style="left:29.75px;width:123.5px"><svg class="oi" viewBox="0 0 16 16"><path d="M4.500 1.600l8.600 6.400-8.600 6.400z" fill="#2f76c0"/></svg><span class="opt">Insert</span></div>
<div class="c k2" style="left:153.25px;width:59.25px"><span>dbo</span></div>
<div class="c k3" style="left:212.5px;width:215.25px"><span>Table001</span></div>
<div class="c k4" style="left:427.75px;width:74.75px"><span>Committed</span></div>
<div class="c k5" style="left:502.5px;width:117px"><span>ZWERKA\Nebojsa</span></div>
<div class="c k6" style="left:619.5px;width:140px"><span>2016-11-11 13:38:15</span></div>
<div class="c k7" style="left:759.5px;width:141px"><span>2016-11-11 13:38:15</span></div>
<div class="c k8" style="left:900.5px;width:135.75px"><span>00:00:00</span></div>
<div class="c k9" style="left:1036.25px;width:118.25px"><span class="up">INSERT</span></div>
<div class="c k10" style="left:1154.5px;width:106.75px"><span>0000:00000338</span></div>
<div class="c k11" style="left:1261.25px;width:208.25px"><span>0x0105000000000005150002000</span></div>
</div>
<div class="gr on" style="top:296px">
<div class="c k0" style="left:0px;width:29.75px"><div class="cb sm on"><svg viewBox="0 0 12 12"><path d="M1.800 5.800l2.900 3 5.400-6.200" fill="none" stroke="#111" stroke-width="2.300"/></svg></div></div>
<div class="c k1" style="left:29.75px;width:123.5px"><svg class="oi" viewBox="0 0 16 16"><path d="M4.500 1.600l8.600 6.400-8.600 6.400z" fill="#2f76c0"/></svg><span class="opt">Insert</span></div>
<div class="c k2" style="left:153.25px;width:59.25px"><span>dbo</span></div>
<div class="c k3" style="left:212.5px;width:215.25px"><span>Table001</span></div>
<div class="c k4" style="left:427.75px;width:74.75px"><span>Committed</span></div>
<div class="c k5" style="left:502.5px;width:117px"><span>ZWERKA\Nebojsa</span></div>
<div class="c k6" style="left:619.5px;width:140px"><span>2016-11-11 13:38:15</span></div>
<div class="c k7" style="left:759.5px;width:141px"><span>2016-11-11 13:38:15</span></div>
<div class="c k8" style="left:900.5px;width:135.75px"><span>00:00:00</span></div>
<div class="c k9" style="left:1036.25px;width:118.25px"><span class="up">INSERT</span></div>
<div class="c k10" style="left:1154.5px;width:106.75px"><span>0000:00000339</span></div>
<div class="c k11" style="left:1261.25px;width:208.25px"><span>0x0105000000000005150002000</span></div>
</div>
<div class="gr on" style="top:318.5px">
<div class="c k0" style="left:0px;width:29.75px"><div class="cb sm on"><svg viewBox="0 0 12 12"><path d="M1.800 5.800l2.900 3 5.400-6.200" fill="none" stroke="#111" stroke-width="2.300"/></svg></div></div>
<div class="c k1" style="left:29.75px;width:123.5px"><svg class="oi" viewBox="0 0 16 16"><path d="M4.500 1.600l8.600 6.400-8.600 6.400z" fill="#2f76c0"/></svg><span class="opt">Insert</span></div>
<div class="c k2" style="left:153.25px;width:59.25px"><span>dbo</span></div>
<div class="c k3" style="left:212.5px;width:215.25px"><span>Table001</span></div>
<div class="c k4" style="left:427.75px;width:74.75px"><span>Committed</span></div>
<div class="c k5" style="left:502.5px;width:117px"><span>ZWERKA\Nebojsa</span></div>
<div class="c k6" style="left:619.5px;width:140px"><span>2016-11-11 13:38:15</span></div>
<div class="c k7" style="left:759.5px;width:141px"><span>2016-11-11 13:38:15</span></div>
<div class="c k8" style="left:900.5px;width:135.75px"><span>00:00:00</span></div>
<div class="c k9" style="left:1036.25px;width:118.25px"><span class="up">INSERT</span></div>
<div class="c k10" style="left:1154.5px;width:106.75px"><span>0000:0000033A</span></div>
<div class="c k11" style="left:1261.25px;width:208.25px"><span>0x0105000000000005150002000</span></div>
</div>
<div class="gr" style="top:341px">
<div class="c k0" style="left:0px;width:29.75px"><div class="cb sm"></div></div>
<div class="c k1" style="left:29.75px;width:123.5px"><svg class="oi" viewBox="0 0 16 16"><path d="M4.500 1.600l8.600 6.400-8.600 6.400z" fill="#2f76c0"/></svg><span class="opt">Insert</span></div>
<div class="c k2" style="left:153.25px;width:59.25px"><span>dbo</span></div>
<div class="c k3" style="left:212.5px;width:215.25px"><span>Table001</span></div>
<div class="c k4" style="left:427.75px;width:74.75px"><span>Committed</span></div>
<div class="c k5" style="left:502.5px;width:117px"><span>ZWERKA\Nebojsa</span></div>
<div class="c k6" style="left:619.5px;width:140px"><span>2016-11-11 13:38:15</span></div>
<div class="c k7" style="left:759.5px;width:141px"><span>2016-11-11 13:38:15</span></div>
<div class="c k8" style="left:900.5px;width:135.75px"><span>00:00:00</span></div>
<div class="c k9" style="left:1036.25px;width:118.25px"><span class="up">INSERT</span></div>
<div class="c k10" style="left:1154.5px;width:106.75px"><span>0000:0000033B</span></div>
<div class="c k11" style="left:1261.25px;width:208.25px"><span>0x0105000000000005150002000</span></div>
</div>
<div class="gr" style="top:363.5px">
<div class="c k0" style="left:0px;width:29.75px"><div class="cb sm"></div></div>
<div class="c k1" style="left:29.75px;width:123.5px"><svg class="oi" viewBox="0 0 16 16"><path d="M4.500 1.600l8.600 6.400-8.600 6.400z" fill="#2f76c0"/></svg><span class="opt">Insert</span></div>
<div class="c k2" style="left:153.25px;width:59.25px"><span>dbo</span></div>
<div class="c k3" style="left:212.5px;width:215.25px"><span>Table001</span></div>
<div class="c k4" style="left:427.75px;width:74.75px"><span>Committed</span></div>
<div class="c k5" style="left:502.5px;width:117px"><span>ZWERKA\Nebojsa</span></div>
<div class="c k6" style="left:619.5px;width:140px"><span>2016-11-11 13:38:15</span></div>
<div class="c k7" style="left:759.5px;width:141px"><span>2016-11-11 13:38:15</span></div>
<div class="c k8" style="left:900.5px;width:135.75px"><span>00:00:00</span></div>
<div class="c k9" style="left:1036.25px;width:118.25px"><span class="up">INSERT</span></div>
<div class="c k10" style="left:1154.5px;width:106.75px"><span>0000:0000033C</span></div>
<div class="c k11" style="left:1261.25px;width:208.25px"><span>0x0105000000000005150002000</span></div>
</div>
<div class="gr" style="top:386px">
<div class="c k0" style="left:0px;width:29.75px"><div class="cb sm"></div></div>
<div class="c k1" style="left:29.75px;width:123.5px"><svg class="oi" viewBox="0 0 16 16"><path d="M6 0.500h7L9.500 5.800h4L4.800 15.500l1.700-6.300H2z" fill="#f2b646"/><path d="M12.300 10.500v5M9.800 13h5" stroke="#2f9d58" stroke-width="2.200"/></svg><span class="opt">Create Trigger</span></div>
<div class="c k2" style="left:153.25px;width:59.25px"><span>dbo</span></div>
<div class="c k3" style="left:212.5px;width:215.25px"><span class="lg">Table001.ApexSQLAuditBeforeTrig</span></div>
<div class="c k4" style="left:427.75px;width:74.75px"><span>Committed</span></div>
<div class="c k5" style="left:502.5px;width:117px"><span>ZWERKA\Nebojsa</span></div>
<div class="c k6" style="left:619.5px;width:140px"><span>2016-11-17 19:17:59</span></div>
<div class="c k7" style="left:759.5px;width:141px"><span>2016-11-17 19:17:59</span></div>
<div class="c k8" style="left:900.5px;width:135.75px"><span>00:00:00.5400000</span></div>
<div class="c k9" style="left:1036.25px;width:118.25px"><span>user_transaction</span></div>
<div class="c k10" style="left:1154.5px;width:106.75px"><span>0000:00000340</span></div>
<div class="c k11" style="left:1261.25px;width:208.25px"><span>0x0105000000000005150002000</span></div>
</div>
<div class="gr on" style="top:408.5px">
<div class="c k0" style="left:0px;width:29.75px"><div class="cb sm on"><svg viewBox="0 0 12 12"><path d="M1.800 5.800l2.900 3 5.400-6.200" fill="none" stroke="#111" stroke-width="2.300"/></svg></div></div>
<div class="c k1" style="left:29.75px;width:123.5px"><svg class="oi" viewBox="0 0 16 16"><path d="M6 0.500h7L9.500 5.800h4L4.800 15.500l1.700-6.300H2z" fill="#f2b646"/><path d="M12.300 10.500v5M9.800 13h5" stroke="#2f9d58" stroke-width="2.200"/></svg><span class="opt">Create Trigger</span></div>
<div class="c k2" style="left:153.25px;width:59.25px"><span>dbo</span></div>
<div class="c k3" style="left:212.5px;width:215.25px"><span class="lg">Table001.ApexSQLAuditInsTrig</span></div>
<div class="c k4" style="left:427.75px;width:74.75px"><span>Committed</span></div>
<div class="c k5" style="left:502.5px;width:117px"><span>ZWERKA\Nebojsa</span></div>
<div class="c k6" style="left:619.5px;width:140px"><span>2016-11-17 19:17:59</span></div>
<div class="c k7" style="left:759.5px;width:141px"><span>2016-11-17 19:17:59</span></div>
<div class="c k8" style="left:900.5px;width:135.75px"><span>00:00:00.5400000</span></div>
<div class="c k9" style="left:1036.25px;width:118.25px"><span>user_transaction</span></div>
<div class="c k10" style="left:1154.5px;width:106.75px"><span>0000:00000341</span></div>
<div class="c k11" style="left:1261.25px;width:208.25px"><span>0x0105000000000005150016000</span></div>
</div>
<div class="gr" style="top:431px">
<div class="c k0" style="left:0px;width:29.75px"><div class="cb sm"></div></div>
<div class="c k1" style="left:29.75px;width:123.5px"><svg class="oi" viewBox="0 0 16 16"><path d="M6 0.500h7L9.500 5.800h4L4.800 15.500l1.700-6.300H2z" fill="#f2b646"/><path d="M12.300 10.500v5M9.800 13h5" stroke="#2f9d58" stroke-width="2.200"/></svg><span class="opt">Create Trigger</span></div>
<div class="c k2" style="left:153.25px;width:59.25px"><span>dbo</span></div>
<div class="c k3" style="left:212.5px;width:215.25px"><span class="lg">Table001.ApexSQLAuditUpdTrig</span></div>
<div class="c k4" style="left:427.75px;width:74.75px"><span>Committed</span></div>
<div class="c k5" style="left:502.5px;width:117px"><span>ZWERKA\Nebojsa</span></div>
<div class="c k6" style="left:619.5px;width:140px"><span>2016-11-17 19:17:59</span></div>
<div class="c k7" style="left:759.5px;width:141px"><span>2016-11-17 19:17:59</span></div>
<div class="c k8" style="left:900.5px;width:135.75px"><span>00:00:00.5400000</span></div>
<div class="c k9" style="left:1036.25px;width:118.25px"><span>user_transaction</span></div>
<div class="c k10" style="left:1154.5px;width:106.75px"><span>0000:00000342</span></div>
<div class="c k11" style="left:1261.25px;width:208.25px"><span>0x0105000000000005150004000</span></div>
</div>
<div class="gr" style="top:453.5px">
<div class="c k0" style="left:0px;width:29.75px"><div class="cb sm"></div></div>
<div class="c k1" style="left:29.75px;width:123.5px"><svg class="oi" viewBox="0 0 16 16"><path d="M6 0.500h7L9.500 5.800h4L4.800 15.500l1.700-6.300H2z" fill="#f2b646"/><path d="M12.300 10.500v5M9.800 13h5" stroke="#2f9d58" stroke-width="2.200"/></svg><span class="opt">Create Trigger</span></div>
<div class="c k2" style="left:153.25px;width:59.25px"><span>dbo</span></div>
<div class="c k3" style="left:212.5px;width:215.25px"><span class="lg">Table001.ApexSQLAuditDelTrig</span></div>
<div class="c k4" style="left:427.75px;width:74.75px"><span>Committed</span></div>
<div class="c k5" style="left:502.5px;width:117px"><span>ZWERKA\Nebojsa</span></div>
<div class="c k6" style="left:619.5px;width:140px"><span>2016-11-17 19:17:59</span></div>
<div class="c k7" style="left:759.5px;width:141px"><span>2016-11-17 19:17:59</span></div>
<div class="c k8" style="left:900.5px;width:135.75px"><span>00:00:00.5400000</span></div>
<div class="c k9" style="left:1036.25px;width:118.25px"><span>user_transaction</span></div>
<div class="c k10" style="left:1154.5px;width:106.75px"><span>0000:00000343</span></div>
<div class="c k11" style="left:1261.25px;width:208.25px"><span>0x0105000000000005150015000</span></div>
</div>
<div class="gr on" style="top:476px">
<div class="c k0" style="left:0px;width:29.75px"><div class="cb sm on"><svg viewBox="0 0 12 12"><path d="M1.800 5.800l2.900 3 5.400-6.200" fill="none" stroke="#111" stroke-width="2.300"/></svg></div></div>
<div class="c k1" style="left:29.75px;width:123.5px"><svg class="oi" viewBox="0 0 16 16"><path d="M6 0.500h7L9.500 5.800h4L4.800 15.500l1.700-6.300H2z" fill="#f2b646"/><path d="M8.800 9.800l6 6M14.800 9.800l-6 6" stroke="#e0352e" stroke-width="2.200"/></svg><span class="opt">Drop Trigger</span></div>
<div class="c k2" style="left:153.25px;width:59.25px"><span>dbo</span></div>
<div class="c k3" style="left:212.5px;width:215.25px"><span class="lg">Table001.ApexSQLAuditBeforeTrig</span></div>
<div class="c k4" style="left:427.75px;width:74.75px"><span>Committed</span></div>
<div class="c k5" style="left:502.5px;width:117px"><span>ZWERKA\Nebojsa</span></div>
<div class="c k6" style="left:619.5px;width:140px"><span>2016-11-24 12:49:54</span></div>
<div class="c k7" style="left:759.5px;width:141px"><span>2016-11-24 12:49:54</span></div>
<div class="c k8" style="left:900.5px;width:135.75px"><span>00:00:00.2470000</span></div>
<div class="c k9" style="left:1036.25px;width:118.25px"><span>user_transaction</span></div>
<div class="c k10" style="left:1154.5px;width:106.75px"><span>0000:00000350</span></div>
<div class="c k11" style="left:1261.25px;width:208.25px"><span>0x0105000000000005150009000</span></div>
</div>
<div class="gr" style="top:498.5px">
<div class="c k0" style="left:0px;width:29.75px"><div class="cb sm"></div></div>
<div class="c k1" style="left:29.75px;width:123.5px"><svg class="oi" viewBox="0 0 16 16"><path d="M6 0.500h7L9.500 5.800h4L4.800 15.500l1.700-6.300H2z" fill="#f2b646"/><path d="M8.800 9.800l6 6M14.800 9.800l-6 6" stroke="#e0352e" stroke-width="2.200"/></svg><span class="opt">Drop Trigger</span></div>
<div class="c k2" style="left:153.25px;width:59.25px"><span>dbo</span></div>
<div class="c k3" style="left:212.5px;width:215.25px"><span class="lg">Table001.ApexSQLAuditInsTrig</span></div>
<div class="c k4" style="left:427.75px;width:74.75px"><span>Committed</span></div>
<div class="c k5" style="left:502.5px;width:117px"><span>ZWERKA\Nebojsa</span></div>
<div class="c k6" style="left:619.5px;width:140px"><span>2016-11-24 12:49:54</span></div>
<div class="c k7" style="left:759.5px;width:141px"><span>2016-11-24 12:49:54</span></div>
<div class="c k8" style="left:900.5px;width:135.75px"><span>00:00:00.2470000</span></div>
<div class="c k9" style="left:1036.25px;width:118.25px"><span>user_transaction</span></div>
<div class="c k10" style="left:1154.5px;width:106.75px"><span>0000:00000351</span></div>
<div class="c k11" style="left:1261.25px;width:208.25px"><span>0x0105000000000005150025000</span></div>
</div>
<div class="gr" style="top:521px">
<div class="c k0" style="left:0px;width:29.75px"><div class="cb sm"></div></div>
<div class="c k1" style="left:29.75px;width:123.5px"><svg class="oi" viewBox="0 0 16 16"><path d="M6 0.500h7L9.500 5.800h4L4.800 15.500l1.700-6.300H2z" fill="#f2b646"/><path d="M8.800 9.800l6 6M14.800 9.800l-6 6" stroke="#e0352e" stroke-width="2.200"/></svg><span class="opt">Drop Trigger</span></div>
<div class="c k2" style="left:153.25px;width:59.25px"><span>dbo</span></div>
<div class="c k3" style="left:212.5px;width:215.25px"><span class="lg">Table001.ApexSQLAuditUpdTrig</span></div>
<div class="c k4" style="left:427.75px;width:74.75px"><span>Committed</span></div>
<div class="c k5" style="left:502.5px;width:117px"><span>ZWERKA\Nebojsa</span></div>
<div class="c k6" style="left:619.5px;width:140px"><span>2016-11-24 12:49:54</span></div>
<div class="c k7" style="left:759.5px;width:141px"><span>2016-11-24 12:49:54</span></div>
<div class="c k8" style="left:900.5px;width:135.75px"><span>00:00:00.2470000</span></div>
<div class="c k9" style="left:1036.25px;width:118.25px"><span>user_transaction</span></div>
<div class="c k10" style="left:1154.5px;width:106.75px"><span>0000:00000352</span></div>
<div class="c k11" style="left:1261.25px;width:208.25px"><span>0x0105000000000005150030000</span></div>
</div>
<div class="gr on" style="top:543.5px">
<div class="c k0" style="left:0px;width:29.75px"><div class="cb sm on"><svg viewBox="0 0 12 12"><path d="M1.800 5.800l2.900 3 5.400-6.200" fill="none" stroke="#111" stroke-width="2.300"/></svg></div></div>
<div class="c k1" style="left:29.75px;width:123.5px"><svg class="oi" viewBox="0 0 16 16"><path d="M6 0.500h7L9.500 5.800h4L4.800 15.500l1.700-6.300H2z" fill="#f2b646"/><path d="M8.800 9.800l6 6M14.800 9.800l-6 6" stroke="#e0352e" stroke-width="2.200"/></svg><span class="opt">Drop Trigger</span></div>
<div class="c k2" style="left:153.25px;width:59.25px"><span>dbo</span></div>
<div class="c k3" style="left:212.5px;width:215.25px"><span class="lg">Table001.ApexSQLAuditDelTrig</span></div>
<div class="c k4" style="left:427.75px;width:74.75px"><span>Committed</span></div>
<div class="c k5" style="left:502.5px;width:117px"><span>ZWERKA\Nebojsa</span></div>
<div class="c k6" style="left:619.5px;width:140px"><span>2016-11-24 12:49:54</span></div>
<div class="c k7" style="left:759.5px;width:141px"><span>2016-11-24 12:49:54</span></div>
<div class="c k8" style="left:900.5px;width:135.75px"><span>00:00:00.2470000</span></div>
<div class="c k9" style="left:1036.25px;width:118.25px"><span>user_transaction</span></div>
<div class="c k10" style="left:1154.5px;width:106.75px"><span>0000:00000353</span></div>
<div class="c k11" style="left:1261.25px;width:208.25px"><span>0x0105000000000005150053000</span></div>
</div>
<div class="vl" style="left:29.75px;top:566px;height:17.5px"></div>
<div class="vl" style="left:153.25px;top:566px;height:17.5px"></div>
<div class="vl" style="left:212.5px;top:566px;height:17.5px"></div>
<div class="vl" style="left:427.75px;top:566px;height:17.5px"></div>
<div class="vl" style="left:502.5px;top:566px;height:17.5px"></div>
<div class="vl" style="left:619.5px;top:566px;height:17.5px"></div>
<div class="vl" style="left:759.5px;top:566px;height:17.5px"></div>
<div class="vl" style="left:900.5px;top:566px;height:17.5px"></div>
<div class="vl" style="left:1036.25px;top:566px;height:17.5px"></div>
<div class="vl" style="left:1154.5px;top:566px;height:17.5px"></div>
<div class="vl" style="left:1261.25px;top:566px;height:17.5px"></div>
</div>
<div class="dots" style="left:951.5px;top:776.5px">.....</div>
<div class="pin" style="left:437.5px;top:795.5px"></div>
<div class="bt" style="left:456.75px">Operation details</div>
<div class="bt" style="left:579.25px">Row history</div>
<div class="bt" style="left:669.25px">Undo script</div>
<div class="bt" style="left:757.5px">Redo script</div>
<div class="bt" style="left:845px">Transaction information</div>
<div class="bnotch" style="left:497.25px;top:821.25px;z-index:5"><svg viewBox="0 0 21 11"><path d="M0 10.500h4l6.500-7.500 6.500 7.500h4" fill="#fff" stroke="#b0b0b0" stroke-width="2"/><path d="M4.500 11.500h12" stroke="#fff" stroke-width="2.500"/></svg></div>
<div class="grid b" style="left:448.75px;top:830px;width:1467.75px;height:135px">
<div class="gh">
<div class="c" style="left:1.25px;width:138.75px"><span>Begin time</span></div>
<div class="c" style="left:140px;width:84.5px"><span>Operation</span></div>
<div class="c" style="left:224.5px;width:71.75px"><span>Schema</span></div>
<div class="c" style="left:296.25px;width:108.25px"><span>Object</span></div>
<div class="c" style="left:404.5px;width:116.75px"><span>User</span></div>
<div class="c" style="left:521.25px;width:140px"><span>End time</span></div>
<div class="c" style="left:661.25px;width:110.75px"><span>Transaction ID</span></div>
<div class="c" style="left:772px;width:176px"><span>LSN</span></div>
<div class="c" style="left:948px;width:495.75px;border-right:none"><span></span></div>
</div>
<div class="gr sel" style="top:26.5px">
<div class="c b0" style="left:1.25px;width:138.75px"><span>2016-11-11 13:06:32</span></div>
<div class="c b1" style="left:140px;width:84.5px"><span>Insert</span></div>
<div class="c b2" style="left:224.5px;width:71.75px"><span>sys</span></div>
<div class="c b3" style="left:296.25px;width:108.25px"><span>sysschobjs</span></div>
<div class="c b4" style="left:404.5px;width:116.75px"><span>ZWERKA\Nebojsa</span></div>
<div class="c b5" style="left:521.25px;width:140px"><span>2016-11-11 13:06:32</span></div>
<div class="c b6" style="left:661.25px;width:110.75px"><span>0000:0000031B</span></div>
<div class="c b7" style="left:772px;width:176px"><span>00000033:000000C8:0003</span></div>
<div class="c b8" style="left:948px;width:495.75px"><span></span></div>
</div>
<div class="gr" style="top:49px">
<div class="c b0" style="left:1.25px;width:138.75px"><span>2016-11-11 13:06:32</span></div>
<div class="c b1" style="left:140px;width:84.5px"><span>Update</span></div>
<div class="c b2" style="left:224.5px;width:71.75px"><span>sys</span></div>
<div class="c b3" style="left:296.25px;width:108.25px"><span>sysschobjs</span></div>
<div class="c b4" style="left:404.5px;width:116.75px"><span>ZWERKA\Nebojsa</span></div>
<div class="c b5" style="left:521.25px;width:140px"><span>2016-11-11 13:06:32</span></div>
<div class="c b6" style="left:661.25px;width:110.75px"><span>0000:0000031B</span></div>
<div class="c b7" style="left:772px;width:176px"><span>00000033:000000C8:000A</span></div>
<div class="c b8" style="left:948px;width:495.75px"><span></span></div>
</div>
<div class="gr" style="top:71.5px">
<div class="c b0" style="left:1.25px;width:138.75px"><span>2016-11-11 13:06:32</span></div>
<div class="c b1" style="left:140px;width:84.5px"><span>Insert</span></div>
<div class="c b2" style="left:224.5px;width:71.75px"><span>sys</span></div>
<div class="c b3" style="left:296.25px;width:108.25px"><span>syscolpars</span></div>
<div class="c b4" style="left:404.5px;width:116.75px"><span>ZWERKA\Nebojsa</span></div>
<div class="c b5" style="left:521.25px;width:140px"><span>2016-11-11 13:06:32</span></div>
<div class="c b6" style="left:661.25px;width:110.75px"><span>0000:0000031B</span></div>
<div class="c b7" style="left:772px;width:176px"><span>00000033:000000C8:000C</span></div>
<div class="c b8" style="left:948px;width:495.75px"><span></span></div>
</div>
<div class="gr" style="top:94px">
<div class="c b0" style="left:1.25px;width:138.75px"><span>2016-11-11 13:06:32</span></div>
<div class="c b1" style="left:140px;width:84.5px"><span>Insert</span></div>
<div class="c b2" style="left:224.5px;width:71.75px"><span>sys</span></div>
<div class="c b3" style="left:296.25px;width:108.25px"><span>syscolpars</span></div>
<div class="c b4" style="left:404.5px;width:116.75px"><span>ZWERKA\Nebojsa</span></div>
<div class="c b5" style="left:521.25px;width:140px"><span>2016-11-11 13:06:32</span></div>
<div class="c b6" style="left:661.25px;width:110.75px"><span>0000:0000031B</span></div>
<div class="c b7" style="left:772px;width:176px"><span>00000033:000000C8:000E</span></div>
<div class="c b8" style="left:948px;width:495.75px"><span></span></div>
</div>
<div class="vl" style="left:140px;top:116.5px;height:20px"></div>
<div class="vl" style="left:224.5px;top:116.5px;height:20px"></div>
<div class="vl" style="left:296.25px;top:116.5px;height:20px"></div>
<div class="vl" style="left:404.5px;top:116.5px;height:20px"></div>
<div class="vl" style="left:521.25px;top:116.5px;height:20px"></div>
<div class="vl" style="left:661.25px;top:116.5px;height:20px"></div>
<div class="vl" style="left:772px;top:116.5px;height:20px"></div>
<div class="vl" style="left:948px;top:116.5px;height:20px"></div>
<div class="vsb"><svg viewBox="0 0 12 9"><path d="M1.500 7l4.500-4.500L10.500 7" fill="none" stroke="#555" stroke-width="2"/></svg><div class="thumb"></div></div>
</div>
<div class="status">
<div class="si" style="left:12.5px"><svg viewBox="0 0 20 22"><rect x="5" y="2" width="10" height="18" rx="1" fill="#fff"/><path d="M7 5.500h6M7 8.500h6" stroke="#0b6fce" stroke-width="1.300"/><rect x="8.500" y="14" width="3" height="3" fill="#0b6fce"/></svg></div><div class="stx cap" style="left:37px">ZWERKA\SQL2014</div>
<div class="si" style="left:163.5px"><svg viewBox="0 0 20 22"><path d="M4 5v13c0 3 12 3 12 0V5z" fill="#fff"/><ellipse cx="10" cy="5" rx="6" ry="2.600" fill="#fff"/><path d="M4 7.500c0 2.600 12 2.600 12 0" fill="none" stroke="#0b6fce" stroke-width="1.200"/></svg></div><div class="stx cap" style="left:189.75px">ApexSQL_DEMO</div>
<div class="si" style="left:1648.75px"><svg viewBox="0 0 20 22"><rect x="2" y="8" width="8" height="11" fill="none" stroke="#fff" stroke-width="1.800"/><rect x="10" y="3" width="8" height="16" fill="none" stroke="#fff" stroke-width="1.800"/><path d="M5 6l2 2 3-4" fill="none" stroke="#fff" stroke-width="1.500"/></svg></div><div class="stx" style="left:1675px">Checked: 0 / 24</div><div class="stx" style="left:1780px">Excluded: 24 / 24</div>
<div class="grip"><svg viewBox="0 0 14 14" fill="#cfe3f6"><rect x="10" y="10" width="2.500" height="2.500"/><rect x="5" y="10" width="2.500" height="2.500"/><rect x="10" y="5" width="2.500" height="2.500"/></svg></div>
</div>
<div class="menu" style="left:1521.25px;top:550.75px;width:250.5px;height:376px">
<div class="mi" style="top:1.75px"><div class="mic"><svg viewBox="0 0 16 16"><path d="M13.500 7a5.500 5.500 0 0 0-9.800-2.500" fill="none" stroke="#3f88d6" stroke-width="2.600"/><path d="M1.500 1.500l1 5.500 5-1.800z" fill="#3a7cc5"/><path d="M2.500 9a5.500 5.500 0 0 0 9.800 2.500" fill="none" stroke="#3a7cc5" stroke-width="2.400"/><path d="M14.500 14.500l-1-5.500-5 1.800z" fill="#3a7cc5"/></svg></div><span>Refresh</span></div>
<div class="mi" style="top:31.75px"><div class="mic"><svg viewBox="0 0 16 16"><path d="M1.500 14V8l2-5h3v3h3V3h3l2 5v6h-5V9h-3v5z" fill="#666"/></svg></div><span>Find</span></div>
<div class="msep" style="top:63.5px"></div>
<div class="mi" style="top:65px"><div class="mic"><svg viewBox="0 0 16 16"><rect x="1.200" y="2" width="13.600" height="12.500" fill="#fff" stroke="#6e6e6e" stroke-width="1.200"/><rect x="1.200" y="2" width="13.600" height="2.200" fill="#8a8a8a"/><path d="M1.200 8h13.600M1.200 11.200h13.600M5.800 4.500v10M10.400 4.500v10" stroke="#8a8a8a" stroke-width=".9"/></svg></div><span>Select transaction</span></div>
<div class="mi" style="top:95px"><div class="mic"><svg viewBox="0 0 16 16"><rect x="1.200" y="2" width="13.600" height="12.500" fill="#fff" stroke="#6e6e6e" stroke-width="1.200"/><rect x="1.200" y="2" width="13.600" height="2.200" fill="#8a8a8a"/><path d="M1.200 8h13.600M1.200 11.200h13.600M5.800 4.500v10M10.400 4.500v10" stroke="#8a8a8a" stroke-width=".9"/><rect x="2" y="5.500" width="3.500" height="8" fill="#3a7cc5"/></svg></div><span>Check all</span></div>
<div class="mi" style="top:125px"><div class="mic"><svg viewBox="0 0 16 16"><rect x="1.200" y="2" width="13.600" height="12.500" fill="#fff" stroke="#6e6e6e" stroke-width="1.200"/><rect x="1.200" y="2" width="13.600" height="2.200" fill="#8a8a8a"/><path d="M1.200 8h13.600M1.200 11.200h13.600M5.800 4.500v10M10.400 4.500v10" stroke="#8a8a8a" stroke-width=".9"/></svg></div><span>Uncheck all</span></div>
<div class="msep" style="top:156.75px"></div>
<div class="mi" style="top:158.5px"><div class="mic"><svg viewBox="0 0 16 16"><path d="M2 6V2h12v4" fill="none" stroke="#666" stroke-width="1.500"/><path d="M2 8.500v6M14 8.500v6" stroke="#666" stroke-width="1.500"/><path d="M3 11.500l3.500-2.800v5.600zM13 11.500l-3.500-2.800v5.600z" fill="#3a7cc5"/><path d="M6 11.500h4" stroke="#3a7cc5" stroke-width="1.500"/></svg></div><span>Auto size columns</span></div>
<div class="mi" style="top:188.5px"><div class="mic"><svg viewBox="0 0 16 16"><rect x="1.200" y="2" width="13.600" height="12.500" fill="#fff" stroke="#6e6e6e" stroke-width="1.200"/><rect x="1.200" y="2" width="13.600" height="2.200" fill="#8a8a8a"/><path d="M1.200 8h13.600M1.200 11.200h13.600M5.800 4.500v10M10.400 4.500v10" stroke="#8a8a8a" stroke-width=".9"/></svg></div><span>Select columns</span></div>
<div class="msep" style="top:220px"></div>
<div class="mi" style="top:222.5px"><div class="mic"><svg viewBox="0 0 16 16"><path d="M5 5.500h5a4 4 0 0 1 0 8H8.500" fill="none" stroke="#3a7cc5" stroke-width="2"/><path d="M1 5.500l5-4.500v9z" fill="#3a7cc5"/><rect x="3" y="9.500" width="4.500" height="6" fill="#fff" stroke="#e8873a" stroke-width="1.200"/></svg></div><span>Create undo script</span></div>
<div class="mi" style="top:252.5px"><div class="mic"><svg viewBox="0 0 16 16"><path d="M11 5.500H6a4 4 0 0 0 0 8h1.500" fill="none" stroke="#3a7cc5" stroke-width="2"/><path d="M15 5.500l-5-4.500v9z" fill="#3a7cc5"/><rect x="8.500" y="9.500" width="4.500" height="6" fill="#fff" stroke="#e8873a" stroke-width="1.200"/></svg></div><span>Create redo script</span></div>
<div class="mi" style="top:282.5px"><div class="mic"><svg viewBox="0 0 16 16"><path d="M6 1.500v2.300h8v2.400H6v2.300L1.500 5z" fill="#e8663a"/><path d="M10 7.500v2.300H2v2.400h8v2.300l4.500-3.500z" fill="#3a7cc5"/></svg></div><span>Create Before-After report</span><b></b></div>
<div class="mi" style="top:312.5px"><div class="mic"><svg viewBox="0 0 16 16"><rect x="1.200" y="2" width="13.600" height="12.500" fill="#fff" stroke="#6e6e6e" stroke-width="1.200"/><rect x="1.200" y="2" width="13.600" height="2.200" fill="#8a8a8a"/><path d="M1.200 8h13.600M1.200 11.200h13.600M5.800 4.500v10M10.400 4.500v10" stroke="#8a8a8a" stroke-width=".9"/><path d="M8 11c3-1 5-.5 6 1.500l1-1 .5 4-4-.5 1-1c-1-1.500-2.500-2-4.500-1.500z" fill="#3a7cc5"/></svg></div><span>Export</span><b></b></div>
<div class="msep" style="top:344.25px"></div>
<div class="mi" style="top:345.5px"><div class="mic"><svg viewBox="0 0 16 16"><path d="M1.500 1.500h5l2 2v7h-7z" fill="#fff" stroke="#777" stroke-width="1.200"/><path d="M6.500 6h5.500l2 2v7H6.500z" fill="#fff" stroke="#777" stroke-width="1.200"/><path d="M8.500 9.500h4M8.500 12h4" stroke="#3a7cc5" stroke-width="1"/></svg></div><span>Copy rows to clipboard</span></div>
</div>
<div class="wm">全攻略</div>
</div></body></html>
